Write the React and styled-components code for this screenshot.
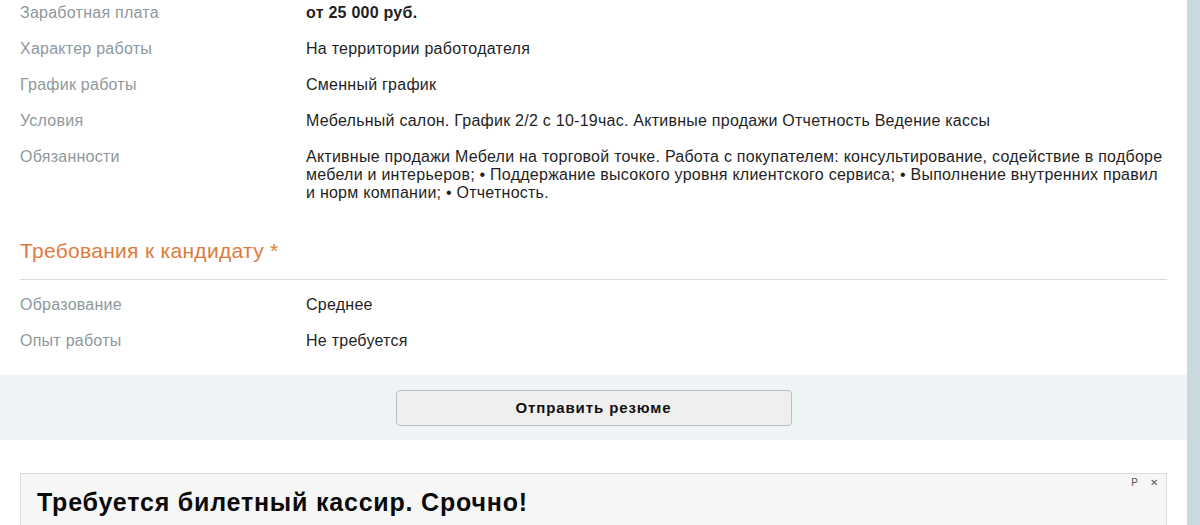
import React from "react";
import styled, { createGlobalStyle } from "styled-components";

const GlobalStyle = createGlobalStyle`
  html, body {
    margin: 0;
    padding: 0;
    background: #ffffff;
    overflow: hidden;
  }
  body {
    font-family: "Liberation Sans", Arial, sans-serif;
  }
`;

const Page = styled.div`
  display: flex;
  width: 1200px;
  height: 525px;
  overflow: hidden;
`;

const Main = styled.div`
  flex: 1;
  display: flex;
  flex-direction: column;
  background: #ffffff;
  & > * {
    flex-shrink: 0;
  }
`;

const SideStrip = styled.div`
  width: 13px;
  flex-shrink: 0;
  background: #c9d9dd;
`;

const Section = styled.div`
  display: flex;
  flex-direction: column;
  gap: 18px;
  padding: ${({ $top }) => $top || 0}px 20px 0;
`;

const Row = styled.div`
  display: grid;
  grid-template-columns: 286px 1fr;
  font-size: 16px;
  letter-spacing: 0.25px;
  line-height: 18px;
`;

const Label = styled.div`
  color: #8e989d;
`;

const Value = styled.div`
  color: #1f1f1f;
  font-weight: ${({ $bold }) => ($bold ? 700 : 400)};
  padding-right: 4px;
`;

const HeadingWrap = styled.div`
  padding: 0 20px;
`;

const Heading = styled.h2`
  margin: 0;
  padding: 38px 0 17px;
  font-size: 21px;
  letter-spacing: 0.3px;
  line-height: 22px;
  font-weight: 400;
  color: #e07a3c;
  border-bottom: 1px solid #dadada;
`;

const ActionBand = styled.div`
  margin-top: 25px;
  height: 65px;
  background: #eef3f6;
  display: flex;
  align-items: center;
  justify-content: center;
`;

const SendButton = styled.button`
  width: 396px;
  height: 36px;
  background: #efefef;
  border: 1px solid #bdbdbd;
  border-radius: 4px;
  font-family: "Liberation Sans", Arial, sans-serif;
  font-size: 15px;
  letter-spacing: 0.9px;
  font-weight: 700;
  color: #111;
  cursor: pointer;
`;

const AdBox = styled.div`
  position: relative;
  margin: 33px 20px 0;
  height: 80px;
  background: #f6f6f6;
  border: 1px solid #dcdcdc;
  border-bottom: none;
  padding: 14px 16px 0;
`;

const AdTitle = styled.div`
  font-size: 25px;
  letter-spacing: 0.8px;
  line-height: 28px;
  font-weight: 700;
  color: #0a0a0a;
`;

const AdControls = styled.div`
  position: absolute;
  top: 3px;
  right: 8px;
  display: flex;
  gap: 12px;
  font-size: 10px;
  color: #555;
`;

const info = [
  { label: "Заработная плата", value: "от 25 000 руб.", bold: true },
  { label: "Характер работы", value: "На территории работодателя" },
  { label: "График работы", value: "Сменный график" },
  {
    label: "Условия",
    value:
      "Мебельный салон. График 2/2 с 10-19час. Активные продажи Отчетность Ведение кассы",
  },
  {
    label: "Обязанности",
    value:
      "Активные продажи Мебели на торговой точке. Работа с покупателем: консультирование, содействие в подборе мебели и интерьеров; • Поддержание высокого уровня клиентского сервиса; • Выполнение внутренних правил и норм компании; • Отчетность.",
  },
];

const requirements = [
  { label: "Образование", value: "Среднее" },
  { label: "Опыт работы", value: "Не требуется" },
];

const App = () => {
  return (
    <>
      <GlobalStyle />
      <Page>
        <Main>
          <Section $top={4}>
            {info.map((item) => (
              <Row key={item.label}>
                <Label>{item.label}</Label>
                <Value $bold={item.bold}>{item.value}</Value>
              </Row>
            ))}
          </Section>
          <HeadingWrap>
            <Heading>Требования к кандидату *</Heading>
          </HeadingWrap>
          <Section $top={16}>
            {requirements.map((item) => (
              <Row key={item.label}>
                <Label>{item.label}</Label>
                <Value>{item.value}</Value>
              </Row>
            ))}
          </Section>
          <ActionBand>
            <SendButton>Отправить резюме</SendButton>
          </ActionBand>
          <AdBox>
            <AdControls>
              <span>P</span>
              <span>✕</span>
            </AdControls>
            <AdTitle>Требуется билетный кассир. Срочно!</AdTitle>
          </AdBox>
        </Main>
        <SideStrip />
      </Page>
    </>
  );
};

export default App;
